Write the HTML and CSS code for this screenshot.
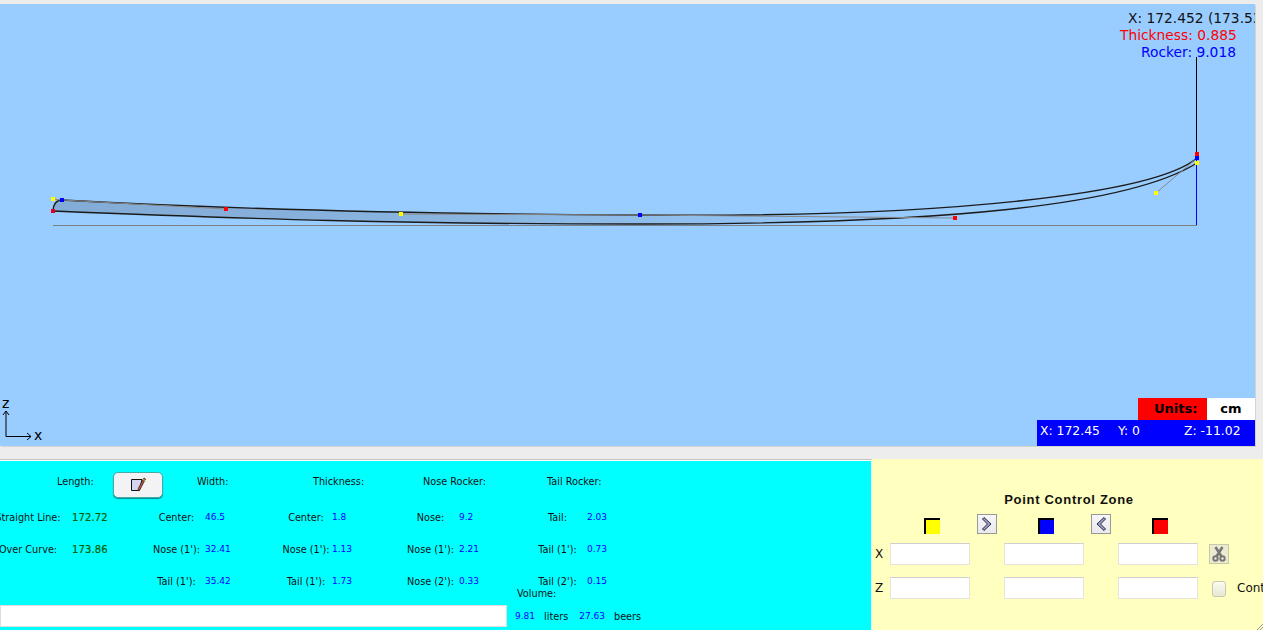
FILE: index.html
```html
<!DOCTYPE html>
<html lang="en">
<head>
    <meta charset="UTF-8">
    <title>Board Designer</title>
    <link rel="stylesheet" href="styles.css">
</head>
<body>
<div class="canvas">
    <svg class="board" width="1255" height="442" viewBox="0 4 1255 442">
        <defs>
            <linearGradient id="boardFill" gradientUnits="userSpaceOnUse" x1="53" y1="0" x2="960" y2="0">
                <stop offset="0" stop-color="#82abd6"/>
                <stop offset="0.45" stop-color="#8ab5e0"/>
                <stop offset="1" stop-color="#99ccff"/>
            </linearGradient>
        </defs>
        <!-- board outline -->
        <path d="M53 211 C53 205 56 200 62 200 C226 209 401 214 640 215 C955 218 1156 193 1197 158 L1197 163 C1130 205 950 224 640 224 C400 224 250 219 53 211 Z" fill="url(#boardFill)"/>
        <path d="M53 225.5 H1197" stroke="#7b7f88" fill="none"/>
        <path d="M1196.5 160 V225" stroke="#0000ff" fill="none"/>
        <path d="M1196.5 57 V155" stroke="#000" fill="none"/>
        <path d="M53 211 C53 205 56 200 62 200 C226 209 401 214 640 215 C955 218 1156 193 1197 158" stroke="#1a1a1a" stroke-width="1.4" fill="none"/>
        <path d="M53 211 C250 219 400 224 640 224 C950 224 1130 205 1197 163" stroke="#1a1a1a" stroke-width="1.4" fill="none"/>
        <!-- control lines -->
        <path d="M62 200 L226 209 M401 214 L640 215 L955 218 M1156 193 L1197 158 M53 199 L62 200" stroke="#888" fill="none"/>
        <!-- control points -->
        <rect x="51" y="209" width="4" height="4" fill="#e0002a"/>
        <rect x="51" y="197" width="4" height="4" fill="#ffff00"/>
        <rect x="60" y="198" width="4" height="4" fill="#0000ff"/>
        <rect x="224" y="207" width="4" height="4" fill="#ff0000"/>
        <rect x="399" y="212" width="4" height="4" fill="#ffff00"/>
        <rect x="638" y="213" width="4" height="4" fill="#0000ff"/>
        <rect x="953" y="216" width="4" height="4" fill="#ff0000"/>
        <rect x="1154" y="191" width="4" height="4" fill="#ffff00"/>
        <rect x="1195" y="152" width="4" height="4" fill="#ff0000"/>
        <rect x="1195" y="156" width="4" height="4" fill="#0000ff"/>
        <rect x="1195" y="161" width="4" height="4" fill="#ffff00"/>
        <!-- axes -->
        <path d="M6 436.5 V411 M3 415 L6 411 L9 415 M6 436.5 H31 M27 433 L31 436.5 L27 440" stroke="#000" fill="none"/>
    </svg>
    <span class="axis-z">z</span>
    <span class="axis-x">x</span>
    <div class="readout">
        <div class="readout-x">X: 172.452 (173.53</div>
        <div class="readout-thick">Thickness: 0.885</div>
        <div class="readout-rocker">Rocker: 9.018</div>
    </div>
    <div class="status">
        <div class="units">
            <span class="units-label">Units:</span>
            <span class="units-value">cm</span>
        </div>
        <div class="coords">
            <span class="coord-x">X: 172.45</span>
            <span class="coord-y">Y: 0</span>
            <span>Z: -11.02</span>
        </div>
    </div>
</div>

<div class="bottom">
    <div class="stats">
        <div class="stats-head">
            <span>Length:</span>
            <button class="edit-button">
                <svg width="16" height="16" viewBox="0 0 16 16">
                    <path d="M1.5 2.5 H12 L9.5 13.5 H1.5 Z" fill="#d5d5f2" stroke="#111"/>
                    <path d="M14 1 L15.5 2 L10 12.5 L8 14 L8.3 11.5 Z" fill="#c8553a" stroke="#332222" stroke-width="0.8"/>
                    <path d="M13.2 2.5 L15 3.5" stroke="#e8c040"/>
                </svg>
            </button>
            <span>Width:</span>
            <span>Thickness:</span>
            <span>Nose Rocker:</span>
            <span>Tail Rocker:</span>
        </div>
        <div class="stats-grid">
            <span class="lbl">Straight Line:</span><span class="val-green">172.72</span>
            <span class="lbl">Center:</span><span class="val">46.5</span>
            <span class="lbl">Center:</span><span class="val">1.8</span>
            <span class="lbl">Nose:</span><span class="val">9.2</span>
            <span class="lbl">Tail:</span><span class="val">2.03</span>

            <span class="lbl">Over Curve:</span><span class="val-green">173.86</span>
            <span class="lbl">Nose (1'):</span><span class="val">32.41</span>
            <span class="lbl">Nose (1'):</span><span class="val">1.13</span>
            <span class="lbl">Nose (1'):</span><span class="val">2.21</span>
            <span class="lbl">Tail (1'):</span><span class="val">0.73</span>

            <span class="lbl"></span><span></span>
            <span class="lbl">Tail (1'):</span><span class="val">35.42</span>
            <span class="lbl">Tail (1'):</span><span class="val">1.73</span>
            <span class="lbl">Nose (2'):</span><span class="val">0.33</span>
            <span class="lbl">Tail (2'):</span><span class="val">0.15</span>
        </div>
        <div class="volume-label">Volume:</div>
        <div class="volume-row">
            <div class="notes"></div>
            <span class="val vol-liters">9.81</span>
            <span class="vol-unit">liters</span>
            <span class="val vol-beers">27.63</span>
            <span class="vol-unit">beers</span>
        </div>
    </div>

    <div class="control">
        <h3 class="control-title">Point Control Zone</h3>
        <div class="control-grid">
            <span></span>
            <span class="swatch swatch-yellow"></span>
            <button class="icon-button">
                <svg width="16" height="16" viewBox="0 0 16 16"><path d="M5 1.5 L12 8 L5 14.5 L3.5 13 L8.5 8 L3.5 3 Z" fill="#a6a6e0" stroke="#111" stroke-width="0.9"/></svg>
            </button>
            <span class="swatch swatch-blue"></span>
            <button class="icon-button">
                <svg width="16" height="16" viewBox="0 0 16 16"><path d="M11 1.5 L4 8 L11 14.5 L12.5 13 L7.5 8 L12.5 3 Z" fill="#a6a6e0" stroke="#111" stroke-width="0.9"/></svg>
            </button>
            <span class="swatch swatch-red"></span>
            <span></span><span></span><span></span><span></span>

            <label class="axis-label">X</label>
            <input class="field" type="text">
            <span></span>
            <input class="field" type="text">
            <span></span>
            <input class="field" type="text">
            <span></span>
            <button class="cut-button">
                <svg width="14" height="16" viewBox="0 0 14 16">
                    <path d="M3.5 1 L9.5 10.5 M10.5 1 L4.5 10.5" stroke="#777" stroke-width="2.6" fill="none"/>
                    <circle cx="3.5" cy="12.5" r="2.2" fill="none" stroke="#777" stroke-width="2"/>
                    <circle cx="10.5" cy="12.5" r="2.2" fill="none" stroke="#777" stroke-width="2"/>
                </svg>
            </button>
            <span></span><span></span>

            <label class="axis-label">Z</label>
            <input class="field" type="text">
            <span></span>
            <input class="field" type="text">
            <span></span>
            <input class="field" type="text">
            <span></span>
            <input class="check" type="checkbox">
            <span></span>
            <span class="check-label">Cont</span>
        </div>
    </div>
</div>
<svg class="grip" width="6" height="6" viewBox="0 0 6 6"><path d="M0 6 L6 0 M3 6 L6 3" stroke="#999"/></svg>
</body>
</html>
```

FILE: styles.css
```css
body {
    margin: 0;
    width: 1263px;
    height: 630px;
    overflow: hidden;
    position: relative;
    background-color: #ededed;
    font-family: "DejaVu Sans", sans-serif;
    font-size: 9.7px;
    color: #111;
}

/* Drawing area */
.canvas {
    position: relative;
    width: 1255px;
    height: 442px;
    margin-top: 4px;
    background-color: #99ccff;
    overflow: hidden;
    box-shadow: 1px 1px 0 #d4d4d4;
}
.board {
    display: block;
}
.axis-z,
.axis-x {
    position: absolute;
    font-size: 14px;
    line-height: 14px;
    color: #000;
}
.axis-z {
    left: 2px;
    top: 392px;
}
.axis-x {
    left: 34px;
    top: 424px;
}
.readout {
    position: absolute;
    top: 6px;
    right: 0;
    width: 135px;
    font-size: 13.8px;
    line-height: 17px;
    white-space: nowrap;
}
.readout-x {
    padding-left: 8px;
    color: #111;
}
.readout-thick {
    color: #ff0000;
}
.readout-rocker {
    padding-left: 21px;
    color: #0000ff;
}
.status {
    position: absolute;
    right: 0;
    bottom: 0;
    width: 218px;
}
.units {
    display: flex;
    justify-content: flex-end;
    height: 22px;
    line-height: 21px;
    font-size: 13px;
    font-weight: bold;
    color: #000;
}
.units-label {
    width: 69px;
    padding-left: 16px;
    box-sizing: border-box;
    background-color: #ff0000;
}
.units-value {
    width: 48px;
    background-color: #fff;
    text-align: center;
}
.coords {
    display: flex;
    height: 26px;
    padding: 3px 0 0 3px;
    box-sizing: border-box;
    background-color: #0000ff;
    color: #fff;
    font-size: 12.4px;
    line-height: 16px;
}
.coord-x {
    width: 78px;
}
.coord-y {
    width: 66px;
}

/* Bottom panels */
.bottom {
    display: flex;
    height: 171px;
    margin-top: 13px;
}
.stats {
    width: 872px;
    box-sizing: border-box;
    overflow: hidden;
    background-color: #00ffff;
    border-top: 1px solid #c4c4c4;
    box-shadow: inset 0 1px 0 #fff;
    border-right: 1px solid #eee;
    padding-top: 12px;
}
.stats-head {
    display: grid;
    grid-template-columns: 56px 84px 116px 110px 124px auto;
    padding-left: 57px;
    height: 26px;
    align-items: center;
    margin-bottom: 3px;
}
.stats-head span {
    position: relative;
    top: -4px;
}
.edit-button {
    width: 50px;
    height: 26px;
    padding: 0;
    border: 1px solid #4aa;
    border-radius: 5px;
    background-color: #f3f2f4;
    box-shadow: 0 1px 1px #088;
    display: flex;
    align-items: center;
    justify-content: center;
}
.stats-grid {
    display: grid;
    grid-template-columns: 88px 76px 57px 75px 52px 70px 57px 69px 59px auto;
    grid-auto-rows: 32px;
    align-items: center;
    margin-left: -16px;
}
.lbl {
    text-align: center;
    white-space: nowrap;
}
.val {
    color: #0000ff;
    font-size: 9px;
}
.val-green {
    color: #006000;
    font-size: 10px;
    letter-spacing: 0.1px;
    -webkit-text-stroke: 0.2px #006000;
}
.volume-label {
    margin: -9px 0 0 517px;
    height: 17px;
    line-height: 12px;
}
.volume-row {
    display: flex;
    align-items: center;
    height: 22px;
}
.notes {
    width: 507px;
    height: 22px;
    box-sizing: border-box;
    background-color: #fff;
    border: 1px solid #dedede;
}
.vol-liters {
    margin-left: 8px;
}
.vol-beers {
    margin-left: 11px;
}
.vol-unit {
    margin-left: 9px;
}

/* Point control zone */
.control {
    flex: 1;
    overflow: hidden;
    background-color: #ffffbf;
}
.control-title {
    margin: 32px 0 7px 3px;
    height: 16px;
    font-family: "Liberation Sans", sans-serif;
    font-size: 13px;
    line-height: 18px;
    font-weight: bold;
    letter-spacing: 0.7px;
    text-align: center;
    color: #111;
}
.control-grid {
    display: grid;
    grid-template-columns: 18px 80px 34px 80px 34px 80px 11px 20px 8px auto;
    grid-template-rows: 20px 31px 34px;
    align-items: end;
    justify-items: center;
}
.swatch {
    width: 16px;
    height: 16px;
    box-sizing: border-box;
    margin-left: 4px;
    border-top: 2px solid #000;
    border-left: 2px solid #000;
}
.swatch-yellow {
    background-color: #ffff00;
}
.swatch-blue {
    background-color: #0000ff;
}
.swatch-red {
    background-color: #ff0000;
}
.icon-button,
.cut-button {
    width: 20px;
    height: 20px;
    padding: 0;
    box-sizing: border-box;
    display: flex;
    align-items: center;
    justify-content: center;
    background: linear-gradient(#f6f6fa, #e9e9ee);
    border: 1px solid #999;
}
.cut-button {
    margin-bottom: 1px;
    background: #ecebd2;
    border-color: #c9c9a8;
}
.axis-label {
    font-size: 12px;
    justify-self: start;
    padding: 0 0 4px 3px;
    color: #111;
}
.field {
    width: 80px;
    height: 22px;
    margin: 0;
    padding: 0;
    box-sizing: border-box;
    background-color: #fff;
    border: 1px solid #e4e4dc;
    border-top-color: #cfcfcf;
    border-radius: 0;
}
.check {
    appearance: none;
    width: 14px;
    height: 16px;
    margin: 0 0 2px;
    border: 1px solid #c8c8b4;
    border-radius: 3px;
    background: linear-gradient(#fbfbf0, #e8e8d4);
}
.check-label {
    justify-self: start;
    padding-bottom: 4px;
    font-size: 12px;
    white-space: nowrap;
    color: #111;
}
.grip {
    position: absolute;
    right: 0;
    bottom: 0;
}
```
